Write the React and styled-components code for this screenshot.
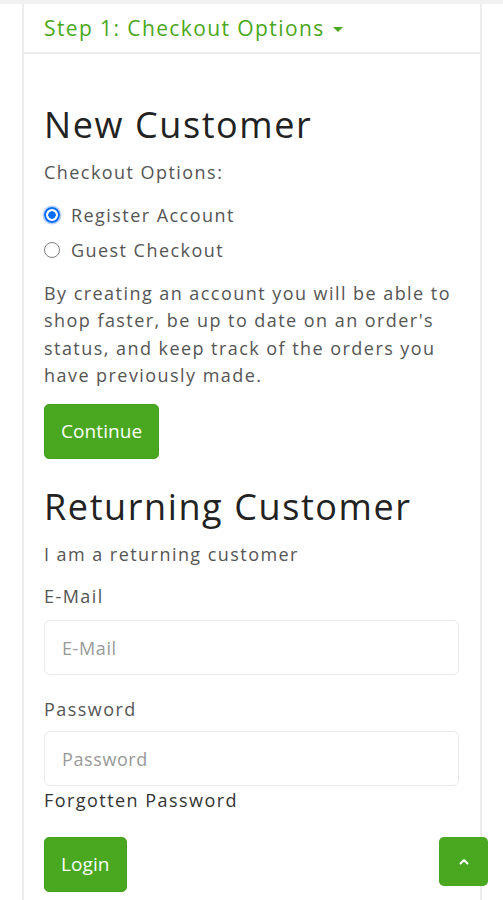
import React from "react";
import styled, { createGlobalStyle } from "styled-components";

const Global = createGlobalStyle`
  html, body { margin: 0; padding: 0; background: #fff; }
  body { font-family: "Open Sans", "Noto Sans", sans-serif; color: #555; }
  * { box-sizing: border-box; }
`;

const green = "#4aa720";

const TopStrip = styled.div`
  height: 4px;
  background: #f1f1f1;
`;

const Page = styled.div`
  padding: 0 21px 0 22px;
`;

const Panel = styled.section`
  border-left: 2px solid #ececec;
  border-right: 2px solid #ececec;
  min-height: 896px;
`;

const PanelHeader = styled.div`
  height: 50px;
  border-bottom: 2px solid #ececec;
  padding: 0 20px;
  display: flex;
  align-items: center;
  color: ${green};
  font-size: 21px;
  letter-spacing: 1.4px;
`;

const Caret = styled.span`
  display: inline-block;
  margin-left: 8px;
  width: 0;
  height: 0;
  border-left: 5px solid transparent;
  border-right: 5px solid transparent;
  border-top: 5.5px solid ${green};
  transform: translateY(1px);
`;

const Body = styled.div`
  padding: 49px 21px 40px 20px;
  display: flex;
  flex-direction: column;
`;

const Heading = styled.h2`
  margin: 0;
  font-size: 36px;
  font-weight: 400;
  line-height: 1.2;
  letter-spacing: 1.6px;
  color: #222;
  margin-top: ${(p) => p.$mt || 0}px;
`;

const Text = styled.p`
  margin: ${(p) => p.$mt || 0}px 0 0;
  font-size: 18px;
  line-height: 27.5px;
  letter-spacing: 1.45px;
  color: ${(p) => p.$dark ? "#333" : "#555"};
`;

const RadioRow = styled.label`
  display: flex;
  align-items: center;
  height: 27px;
  margin-top: ${(p) => p.$mt || 0}px;
  font-size: 18px;
  letter-spacing: 1.45px;
  color: #555;
`;

const Radio = styled.input.attrs({ type: "radio" })`
  appearance: none;
  margin: 0 11px 0 0;
  width: 16px;
  height: 16px;
  border-radius: 50%;
  border: 1.5px solid #808080;
  background: #fff;
  &:checked {
    border: 2px solid #0b6ef5;
    background: radial-gradient(circle, #0b6ef5 0 3.5px, #fff 4px);
    box-shadow: 0 0 0 1.5px #b9d3fa;
  }
`;

const Button = styled.button`
  align-self: flex-start;
  margin-top: ${(p) => p.$mt || 0}px;
  height: 55px;
  padding: 0 16px;
  background: ${green};
  border: 1px solid #46a01d;
  border-radius: 5px;
  color: #fff;
  font-family: "Open Sans", sans-serif;
  font-size: 19px;
  letter-spacing: 0.1px;
`;

const Label = styled.label`
  display: block;
  margin-top: ${(p) => p.$mt || 0}px;
  font-size: 18px;
  line-height: 27px;
  letter-spacing: 1.45px;
  color: #555;
`;

const Input = styled.input`
  display: block;
  width: 100%;
  height: 55px;
  margin-top: ${(p) => p.$mt || 0}px;
  padding: 0 17px;
  border: 1px solid #e9e9e9;
  border-radius: 6px;
  font-family: "Open Sans", sans-serif;
  font-size: 18px;
  letter-spacing: 0.6px;
  color: #555;
  &::placeholder { color: #999; }
`;

const ScrollTop = styled.button`
  position: fixed;
  right: 15px;
  bottom: 14px;
  width: 49px;
  height: 49px;
  border: none;
  border-radius: 5px;
  background: ${green};
  display: flex;
  align-items: center;
  justify-content: center;
  padding: 0;
`;

export default function App() {
  return (
    <>
      <Global />
      <TopStrip />
      <Page>
        <Panel>
          <PanelHeader>
            Step 1: Checkout Options<Caret />
          </PanelHeader>
          <Body>
            <Heading>New Customer</Heading>
            <Text $mt={13}>Checkout Options:</Text>
            <RadioRow $mt={15}>
              <Radio name="account" defaultChecked />
              Register Account
            </RadioRow>
            <RadioRow $mt={8}>
              <Radio name="account" />
              Guest Checkout
            </RadioRow>
            <Text $mt={16}>
              By creating an account you will be able to shop faster, be up to date on an order's status, and keep track of the orders you have previously made.
            </Text>
            <Button $mt={14}>Continue</Button>
            <Heading $mt={26}>Returning Customer</Heading>
            <Text $mt={13}>I am a returning customer</Text>
            <Label $mt={15}>E-Mail</Label>
            <Input $mt={10} placeholder="E-Mail" />
            <Label $mt={21}>Password</Label>
            <Input $mt={8} type="password" placeholder="Password" />
            <Text $dark $mt={1}>Forgotten Password</Text>
            <Button $mt={22}>Login</Button>
          </Body>
        </Panel>
      </Page>
      <ScrollTop aria-label="Back to top">
        <svg width="10" height="7" viewBox="0 0 10 7">
          <path d="M1.5 5.5 L5 2 L8.5 5.5" fill="none" stroke="#fff" strokeWidth="2" strokeLinecap="round" strokeLinejoin="round" />
        </svg>
      </ScrollTop>
    </>
  );
}
